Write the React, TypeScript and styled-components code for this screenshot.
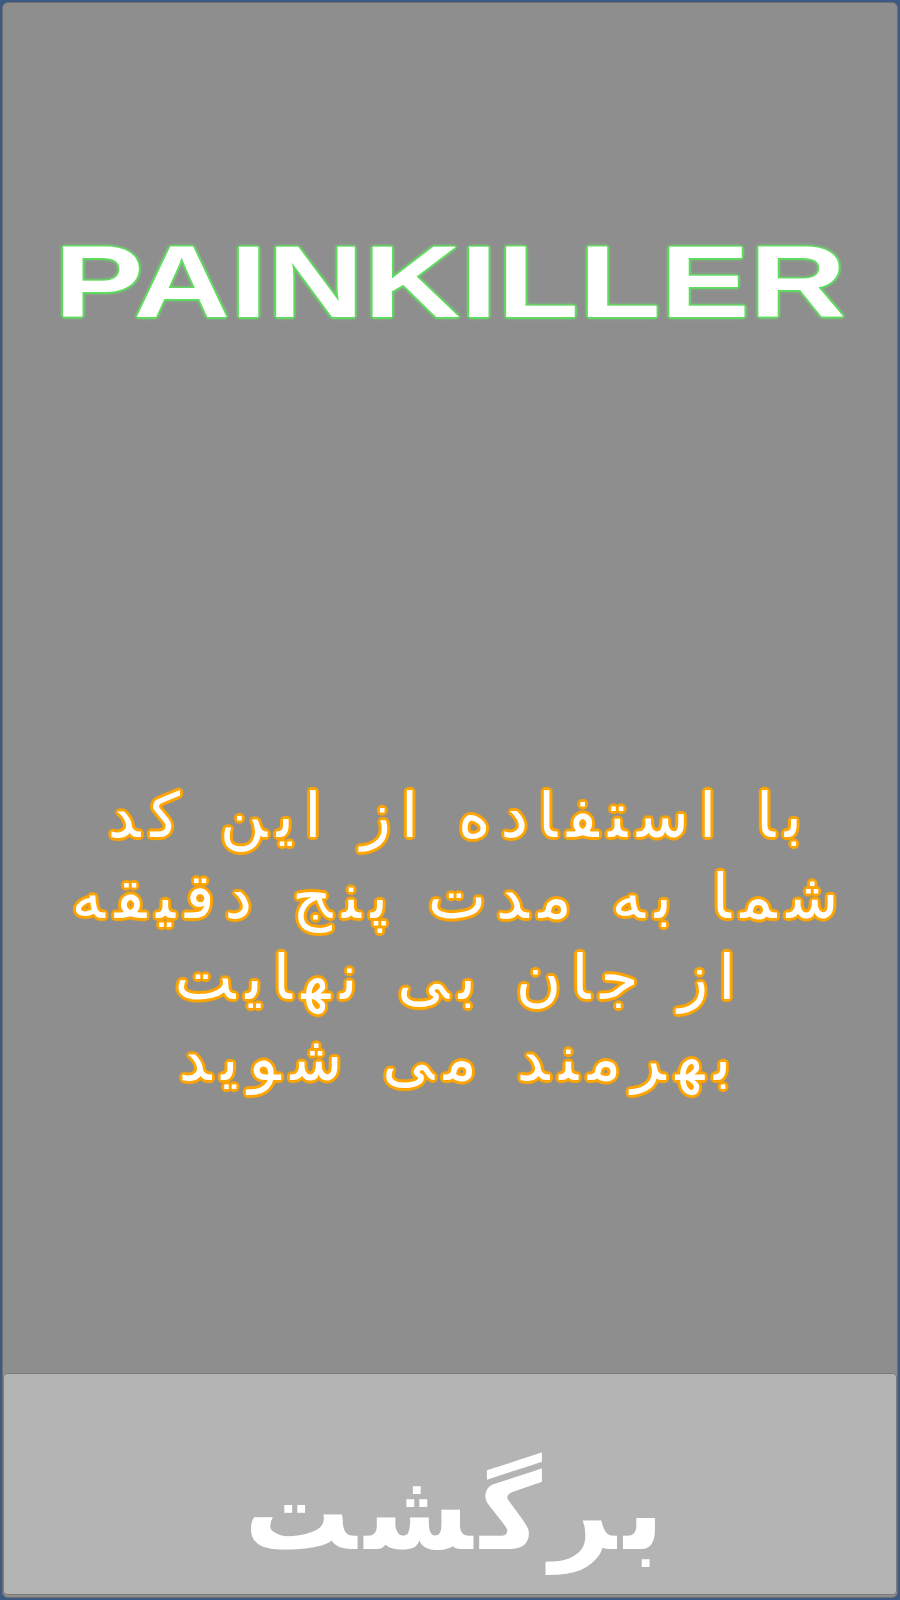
import React from 'react';
import styled, { createGlobalStyle } from 'styled-components';

const GlobalStyle = createGlobalStyle`
  html, body {
    margin: 0;
    padding: 0;
    background-color: #3d5a85;
  }
`;

const Frame = styled.div`
  width: 900px;
  height: 1600px;
  box-sizing: border-box;
  padding: 2px;
  background-color: #3d5a85;
`;

const Panel = styled.div`
  height: 100%;
  box-sizing: border-box;
  background-color: #8e8e8e;
  border: 1px solid #6f6f6f;
  border-radius: 6px;
  display: flex;
  flex-direction: column;
  overflow: hidden;
`;

const Content = styled.div`
  flex: 1;
  display: flex;
  flex-direction: column;
  align-items: center;
`;

const Title = styled.h1`
  margin: 224px 0 0 0;
  font-family: "Liberation Sans", Arial, sans-serif;
  font-weight: bold;
  font-size: 102px;
  line-height: 110px;
  color: #ffffff;
  display: inline-block;
  transform: scaleX(1.31);
  text-shadow:
    1.5px 0 1px #5fdc5f,
    -1.5px 0 1px #5fdc5f,
    0 1.5px 1px #5fdc5f,
    0 -1.5px 1px #5fdc5f,
    1px 1px 1px #5fdc5f,
    -1px -1px 1px #5fdc5f,
    1px -1px 1px #5fdc5f,
    -1px 1px 1px #5fdc5f,
    0 0 4px #8fe88f;
`;

const Message = styled.p`
  margin: 438px 0 0 0;
  direction: rtl;
  text-align: center;
  font-family: "DejaVu Sans", sans-serif;
  font-size: 62px;
  line-height: 81px;
  color: #ffffff;
  text-shadow:
    3px 0 1px #ffa500,
    -3px 0 1px #ffa500,
    0 3px 1px #ffa500,
    0 -3px 1px #ffa500,
    2px 2px 1px #ffa500,
    -2px -2px 1px #ffa500,
    2px -2px 1px #ffa500,
    -2px 2px 1px #ffa500,
    0 0 3px #ffa500;
`;

// game-engine style character spacing: each glyph keeps its joined form, spaced apart
const Letter = styled.span<{ $gap: number }>`
  margin-left: ${p => p.$gap}px;
`;

const BackButton = styled.button`
  height: 222px;
  margin: 0 0 2px 0;
  border: 1px solid #7a7a7a;
  border-radius: 4px;
  background-color: #b4b4b4;
  color: #ffffff;
  font-family: "DejaVu Sans", sans-serif;
  font-weight: bold;
  font-size: 106px;
  direction: rtl;
  cursor: pointer;
  padding: 56px 0 0 0;
`;

const Spaced = ({ text, gap }: { text: string; gap: number }) => (
  <>
    {Array.from(text).map((ch, i) => (
      <Letter key={i} $gap={gap}>{ch}</Letter>
    ))}
  </>
);

const lines = [
  'با استفاده از این کد',
  'شما به مدت پنج دقیقه',
  'از جان بی نهایت',
  'بهرمند می شوید',
];

export default function App() {
  return (
    <>
      <GlobalStyle />
      <Frame>
        <Panel>
          <Content>
            <Title>PAINKILLER</Title>
            <Message>
              {lines.map((line, i) => (
                <React.Fragment key={i}>
                  <Spaced text={line} gap={10} />
                  {i < lines.length - 1 && <br />}
                </React.Fragment>
              ))}
            </Message>
          </Content>
          <BackButton>
            <Spaced text="برگشت" gap={8} />
          </BackButton>
        </Panel>
      </Frame>
    </>
  );
}
